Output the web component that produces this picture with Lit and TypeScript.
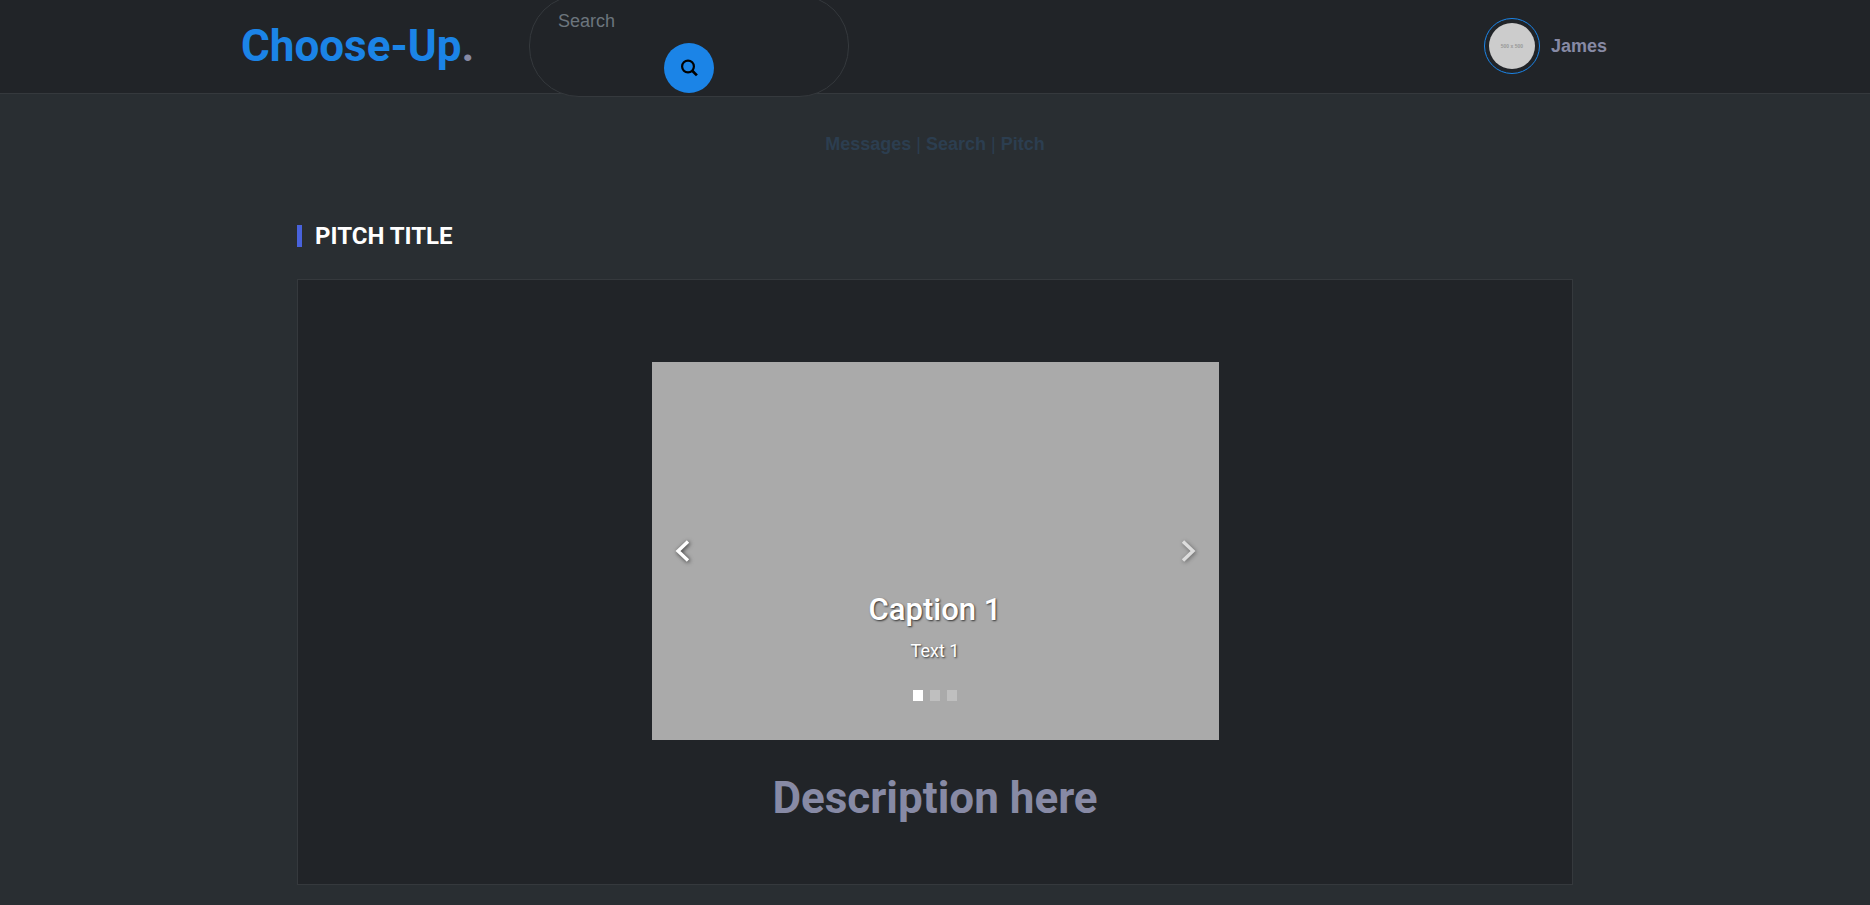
import { LitElement, html, css } from "lit";
import { customElement, state } from "lit/decorators.js";

const slides = [
  { caption: "Caption 1", text: "Text 1" },
  { caption: "Caption 2", text: "Text 2" },
  { caption: "Caption 3", text: "Text 3" },
];

@customElement("app-header")
class AppHeader extends LitElement {
  static styles = css`
    :host {
      display: block;
      background: #212428;
      border-bottom: 1px solid #35393d;
      font-family: "Liberation Sans", Arial, sans-serif;
    }
    .bar {
      box-sizing: border-box;
      max-width: 1400px;
      height: 93px;
      margin: 0 auto;
      padding: 0 28px 1px 6px;
      display: flex;
      align-items: center;
    }
    .logo {
      font: 700 44px/56px Roboto, sans-serif;
      color: #1b84e7;
      text-decoration: none;
      flex: 0 0 288px;
    }
    .dot {
      color: #878aa5;
    }
    .search {
      box-sizing: border-box;
      flex: 0 1 320px;
      height: 102px;
      border: 1px solid #35393d;
      border-radius: 50px;
      background: #212428;
      display: flex;
      flex-direction: column;
      align-items: center;
    }
    .search input {
      box-sizing: border-box;
      width: 100%;
      height: 47px;
      padding: 4px 28px 0;
      border: 0;
      outline: 0;
      background: none;
      color: #fff;
      font: 18px/24px "Liberation Sans", Arial, sans-serif;
    }
    .search input::placeholder {
      color: #6c757d;
      opacity: 1;
    }
    .search button {
      width: 50px;
      height: 50px;
      padding: 0;
      border: 0;
      border-radius: 50%;
      background: #1b84e7;
      display: grid;
      place-items: center;
    }
    .user {
      margin-left: auto;
      display: flex;
      align-items: center;
      gap: 11px;
      color: #878aa5;
      font-size: 18px;
      line-height: 24px;
      font-weight: 700;
      text-decoration: none;
    }
    .avatar {
      box-sizing: border-box;
      width: 56px;
      height: 56px;
      padding: 4px;
      border: 1px solid #1b84e7;
      border-radius: 50%;
    }
    .photo {
      height: 46px;
      border-radius: 50%;
      background: #ccc;
      color: #999;
      font-size: 5px;
      line-height: 46px;
      text-align: center;
    }
  `;

  render() {
    return html`<header class="bar">
      <a class="logo" href="#">Choose-Up<span class="dot">.</span></a>
      <form class="search" @submit=${(e: Event) => e.preventDefault()}>
        <input type="text" placeholder="Search" aria-label="Search" />
        <button type="submit" aria-label="Submit search">
          <svg width="18" height="18" viewBox="0 0 18 18" fill="none" stroke="#000">
            <circle cx="8" cy="7.5" r="5.9" stroke-width="2.2" />
            <path d="M12 11.5 16.9 16.4" stroke-width="2.7" />
          </svg>
        </button>
      </form>
      <a class="user" href="#">
        <span class="avatar"><div class="photo">500 x 500</div></span>
        <span>James</span>
      </a>
    </header>`;
  }
}

@customElement("pitch-carousel")
class PitchCarousel extends LitElement {
  @state() private index = 0;

  static styles = css`
    :host {
      display: block;
      color: #fff;
      font-family: Roboto, sans-serif;
    }
    .slide {
      box-sizing: border-box;
      aspect-ratio: 3 / 2;
      background: #aaa;
      display: grid;
      grid-template-columns: 15% 1fr 15%;
    }
    .arrow {
      padding: 0 22px;
      border: 0;
      background: none;
      color: #fff;
      display: flex;
      align-items: center;
      filter: drop-shadow(1px 1px 2px #333);
    }
    .next {
      justify-content: flex-end;
      opacity: 0.6;
    }
    .content {
      display: flex;
      flex-direction: column;
      justify-content: flex-end;
      align-items: center;
      padding-bottom: 39px;
    }
    h3 {
      margin: 0;
      font-size: 31px;
      line-height: 36px;
      font-weight: 500;
      text-shadow: 1px 1px 2px #333;
    }
    p {
      margin: 9px 0 25px;
      font-size: 18px;
      line-height: 28px;
      text-shadow: 1px 1px 2px #333;
    }
    .dots {
      display: flex;
      gap: 7px;
    }
    .dots button {
      width: 10px;
      height: 11px;
      padding: 0;
      border: 0;
      background: #bfbfbf;
    }
    .dots .active {
      background: #fff;
    }
  `;

  private go(i: number) {
    this.index = (i + slides.length) % slides.length;
  }

  render() {
    const s = slides[this.index];
    return html`<section class="slide" aria-label="Pitch pictures">
      <button class="arrow" aria-label="Previous" @click=${() => this.go(this.index - 1)}>
        <svg width="18" height="24" viewBox="0 0 18 24" fill="none" stroke="currentColor" stroke-width="3.4">
          <path d="M14 2.5 4 12 14 21.5" />
        </svg>
      </button>
      <div class="content">
        <h3>${s.caption}</h3>
        <p>${s.text}</p>
        <div class="dots">
          ${slides.map(
            (d, i) => html`<button
              class=${i === this.index ? "active" : ""}
              aria-label=${d.caption}
              @click=${() => this.go(i)}
            ></button>`
          )}
        </div>
      </div>
      <button class="arrow next" aria-label="Next" @click=${() => this.go(this.index + 1)}>
        <svg width="18" height="24" viewBox="0 0 18 24" fill="none" stroke="currentColor" stroke-width="3.4">
          <path d="M4 2.5 14 12 4 21.5" />
        </svg>
      </button>
    </section>`;
  }
}

@customElement("app-root")
class AppRoot extends LitElement {
  static styles = css`
    :host {
      display: block;
      min-height: 100vh;
      background: #292e32;
      font-family: "Liberation Sans", Arial, sans-serif;
    }
    nav {
      padding: 38px 0 0;
      text-align: center;
      color: #2c3e50;
      font-size: 18px;
      line-height: 24px;
    }
    nav a {
      color: #2c3e50;
      font-weight: 700;
      text-decoration: none;
    }
    main {
      box-sizing: border-box;
      max-width: 1306px;
      margin: 0 auto;
      padding: 65px 15px 20px;
      font-family: Roboto, sans-serif;
    }
    .title {
      margin: 0;
      display: flex;
      align-items: center;
      gap: 13px;
      color: #fff;
      font-size: 24px;
      line-height: 30px;
      font-weight: 700;
      text-transform: uppercase;
    }
    .title::before {
      content: "";
      width: 5px;
      height: 22px;
      background: #4862dc;
    }
    .card {
      margin-top: 28px;
      padding: 82px 30px 57px;
      border: 1px solid #35393d;
      background: #212428;
    }
    pitch-carousel {
      max-width: 567px;
      margin: 0 auto;
    }
    .description {
      margin: 29px 0 0;
      color: #878aa5;
      font-size: 44px;
      line-height: 58px;
      font-weight: 700;
      text-align: center;
    }
  `;

  render() {
    return html`<app-header></app-header>
      <nav><a href="#">Messages</a> | <a href="#">Search</a> | <a href="#">Pitch</a></nav>
      <main>
        <h1 class="title">Pitch title</h1>
        <div class="card">
          <pitch-carousel></pitch-carousel>
          <h2 class="description">Description here</h2>
        </div>
      </main>`;
  }
}
